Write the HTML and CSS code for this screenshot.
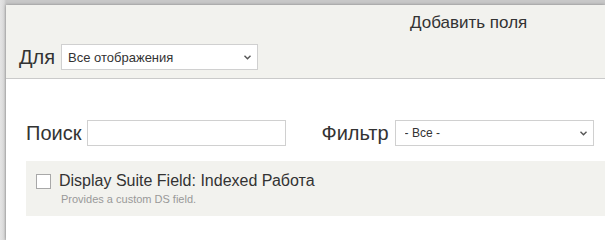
FILE: index.html
```html
<!DOCTYPE html>
<html lang="ru">
<head>
<meta charset="utf-8">
<title>Добавить поля</title>
<link rel="stylesheet" href="styles.css">
</head>
<body>
<div class="backdrop">
  <div class="dialog">
    <div class="header">
      <div class="title">Добавить поля</div>
      <div class="for-row">
        <span class="for-label">Для</span>
        <div class="select-wrap select-for">
          <select class="select">
            <option>Все отображения</option>
          </select>
          <svg class="chev" width="7" height="5" viewBox="0 0 7 5"><path d="M0.5 0.8 L3.5 3.8 L6.5 0.8" fill="none" stroke="#555" stroke-width="1.4"/></svg>
        </div>
      </div>
    </div>
    <div class="content">
      <div class="search-row">
        <div class="field">
          <label class="big-label">Поиск</label>
          <input class="text-input" type="text">
        </div>
        <div class="field">
          <label class="big-label">Фильтр</label>
          <div class="select-wrap select-filter">
            <select class="select small">
              <option>- Все -</option>
            </select>
            <svg class="chev" width="7" height="5" viewBox="0 0 7 5"><path d="M0.5 0.8 L3.5 3.8 L6.5 0.8" fill="none" stroke="#555" stroke-width="1.4"/></svg>
          </div>
        </div>
      </div>
      <div class="item">
        <div class="item-head">
          <span class="checkbox"></span>
          <span class="item-label">Display Suite Field: Indexed Работа</span>
        </div>
        <div class="item-desc">Provides a custom DS field.</div>
      </div>
    </div>
  </div>
</div>
</body>
</html>
```

FILE: styles.css
```css
html, body {
  margin: 0;
  padding: 0;
  height: 100%;
  overflow: hidden;
}
body {
  background: linear-gradient(to right, #e4e4e4 0, #dadada 4px, #c8c8c8 6px);
  font-family: "Liberation Sans", Arial, sans-serif;
  color: #333;
}
.backdrop {
  display: flex;
  height: 100%;
  box-sizing: border-box;
  padding: 5px 0 0 6px;
}
.dialog {
  flex: 1;
  min-width: 0;
  background: #fff;
  box-shadow: 0 0 3px rgba(0, 0, 0, 0.35);
  overflow: hidden;
}
.header {
  background: #f2f2ee;
  border-bottom: 1px solid #cacaca;
  height: 74px;
  box-sizing: border-box;
  padding: 8px 0 0 13px;
}
.title {
  font-size: 17px;
  line-height: 20px;
  padding-left: 391px;
  color: #333;
  white-space: nowrap;
}
.for-row {
  display: flex;
  align-items: center;
  gap: 6px;
  margin-top: 11px;
}
.for-label {
  font-size: 20px;
  color: #333;
}
.select-wrap {
  position: relative;
  display: inline-block;
}
.select {
  -webkit-appearance: none;
  appearance: none;
  box-sizing: border-box;
  height: 26px;
  border: 1px solid #d0d0d0;
  background: #fff;
  font-family: "Liberation Sans", Arial, sans-serif;
  font-size: 13px;
  color: #333;
  padding: 0 20px 0 6px;
  border-radius: 0;
  margin: 0;
  outline: none;
}
.select-for .select { width: 197px; }
.select-for .chev { position: absolute; right: 7px; top: 11px; }
.select.small { font-size: 12px; padding-left: 9px; }
.select-filter .select { width: 199px; }
.select-filter .chev { position: absolute; right: 7px; top: 11px; }
.content {
  padding: 41px 0 0 20px;
}
.search-row {
  display: flex;
  align-items: center;
  gap: 35px;
  white-space: nowrap;
}
.field {
  display: flex;
  align-items: center;
  gap: 6px;
  flex: none;
}
.big-label {
  font-size: 20px;
  color: #333;
}
.text-input {
  box-sizing: border-box;
  width: 199px;
  height: 26px;
  border: 1px solid #d0d0d0;
  margin: 0;
  padding: 0 4px;
  outline: none;
}
.item {
  margin-top: 15px;
  background: #f2f2ee;
  height: 55px;
  box-sizing: border-box;
  padding: 11px 0 0 10px;
}
.item-head {
  display: flex;
  align-items: center;
  gap: 8px;
}
.checkbox {
  width: 15px;
  height: 15px;
  box-sizing: border-box;
  border: 1px solid #a8a8a8;
  background: #fff;
  flex: none;
}
.item-label {
  font-size: 16px;
  line-height: 18px;
  color: #333;
}
.item-desc {
  font-size: 11px;
  color: #999;
  margin: 3px 0 0 25px;
}
```
